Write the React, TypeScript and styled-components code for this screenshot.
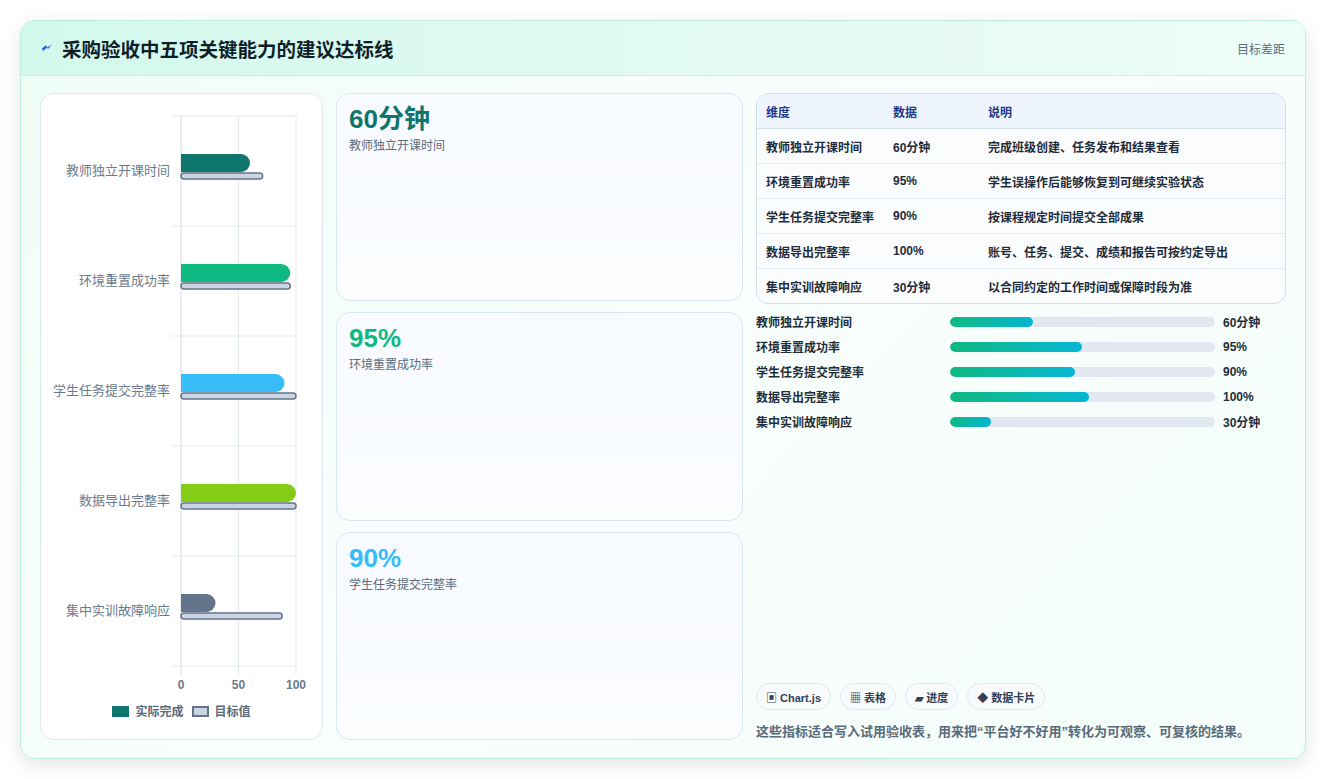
import React from "react";
import styled, { createGlobalStyle } from "styled-components";

const G = createGlobalStyle`
  html,body{margin:0;padding:0;background:#fff;}
  body{font-family:"Liberation Sans","Noto Sans CJK SC",sans-serif;}
`;
const Page = styled.div`padding:20px 21px 20px 20px;height:779px;box-sizing:border-box;`;
const Card = styled.div`
  height:739px;box-sizing:border-box;border:1px solid #bfeee0;border-radius:14px;overflow:hidden;
  background:linear-gradient(135deg,#effdf7 0%,#f8fefc 50%,#f4fdf9 100%);
  box-shadow:0 6px 18px rgba(15,60,50,.12);display:flex;flex-direction:column;
`;
const Header = styled.div`
  height:55px;flex:none;box-sizing:border-box;display:flex;align-items:center;justify-content:space-between;
  padding:0 20px;background:linear-gradient(90deg,#d2f8ec,#e4fbf3 60%,#eefdf8);border-bottom:1px solid #c9efe3;
`;
const Title = styled.h1`margin:0;font-size:19.5px;font-weight:700;color:#0f1f2a;display:flex;align-items:center;gap:9px;`;
const HeadRight = styled.span`font-size:12px;color:#5a6b7a;`;
const Body = styled.div`flex:1;display:grid;grid-template-columns:283px 407px 530px;gap:13px;padding:17px 18px 18px 19px;min-height:0;`;
const Panel = styled.div`background:#fff;border:1px solid #dfe8ee;border-radius:14px;display:flex;flex-direction:column;align-items:center;`;
const Legend = styled.div`display:flex;gap:8px;font-size:12px;font-weight:700;color:#5a6b7a;align-items:center;margin-top:8px;`;
const Sw = styled.span<{ $c: string; $b: string }>`display:inline-block;width:17px;height:11px;background:${p => p.$c};border:2px solid ${p => p.$b};box-sizing:border-box;margin-right:6px;vertical-align:-1px;`;
const Stack = styled.div`display:grid;grid-template-rows:repeat(3,1fr);gap:11px;`;
const Stat = styled.div`background:linear-gradient(180deg,#f7faff,#fbfdff);border:1px solid #dce6f0;border-radius:14px;padding:10px 12px;`;
const Big = styled.div<{ $c: string }>`font-size:26px;font-weight:700;color:${p => p.$c};line-height:30px;`;
const Sub = styled.div`font-size:12px;color:#5a6b7a;margin-top:2px;`;
const Right = styled.div`display:flex;flex-direction:column;`;
const Table = styled.table`width:100%;border-collapse:separate;border-spacing:0;border:1px solid #cfdfe8;border-radius:12px;overflow:hidden;font-size:12px;background:#fbfcfe;`;
const Th = styled.th`text-align:left;font-weight:700;color:#1e3a8a;background:#eef5fe;height:34px;padding:0 9px;border-bottom:1px solid #d5e2ec;`;
const Td = styled.td`height:34px;padding:0 9px;color:#1f2d3a;font-weight:700;border-bottom:1px solid #e3eaf0;tr:last-child &{border-bottom:none;}`;
const Prog = styled.div`display:grid;grid-template-columns:186px 265px 1fr;column-gap:8px;align-items:center;height:25px;font-size:12px;font-weight:700;color:#1f2d3a;`;
const Track = styled.div`height:10px;border-radius:5px;background:#e2e8f0;overflow:hidden;`;
const Fill = styled.div`height:100%;border-radius:5px;background:linear-gradient(90deg,#10b981,#06b6d4);`;
const Chips = styled.div`margin-top:auto;display:flex;gap:9px;`;
const Chip = styled.span`height:27px;box-sizing:border-box;padding:0 9px;border:1px solid #e1e7ee;border-radius:14px;background:#f8fafc;font-size:11px;font-weight:700;color:#334155;display:flex;align-items:center;gap:3px;`;
const Note = styled.p`margin:11px 0 0;font-size:13px;font-weight:700;color:#5a6b7a;`;

const rows = [
  ["教师独立开课时间", "60分钟", "完成班级创建、任务发布和结果查看", 60, 71, "#0f766e", 31.3],
  ["环境重置成功率", "95%", "学生误操作后能够恢复到可继续实验状态", 95, 95, "#10b981", 49.8],
  ["学生任务提交完整率", "90%", "按课程规定时间提交全部成果", 90, 100, "#38bdf8", 47.2],
  ["数据导出完整率", "100%", "账号、任务、提交、成绩和报告可按约定导出", 100, 100, "#84cc16", 52.5],
  ["集中实训故障响应", "30分钟", "以合同约定的工作时间或保障时段为准", 30, 88, "#64748b", 15.5],
] as const;

function Chart() {
  const x0 = 141, w = 115, top = 22;
  return (
    <svg width="283" height="600" viewBox="0 0 283 600">
      {[0, 1, 2, 3, 4, 5].map(i => <line key={i} x1={132} x2={256} y1={top + i * 110} y2={top + i * 110} stroke="#e5e9f0" />)}
      {[0, 0.5, 1].map(f => <line key={f} x1={x0 + f * w} x2={x0 + f * w} y1={top} y2={top + 559} stroke={f === 0 ? "#d4dae3" : "#e5e9f0"} />)}
      {rows.map((r, i) => {
        const cy = top + i * 110 + 55;
        const a = (r[3] / 100) * w, t = (r[4] / 100) * w;
        return (
          <g key={i}>
            <text x={130} y={cy + 4} textAnchor="end" fontSize="13" fill="#6b7a8c">{r[0]}</text>
            <path d={`M${x0} ${cy - 17}h${a - 9}a9 9 0 0 1 0 18h${-(a - 9)}z`} fill={r[5]} />
            <rect x={x0} y={cy + 2} width={t} height={6} rx={3} fill="#cbd5e1" stroke="#64748b" strokeWidth="1.5" />
          </g>
        );
      })}
      {[0, 50, 100].map((v, i) => <text key={v} x={x0 + i * w / 2} y={top + 573} textAnchor="middle" fontSize="12" fontWeight="700" fill="#6b7a8c">{v}</text>)}
    </svg>
  );
}

export default function App() {
  return (
    <Page>
      <G />
      <Card>
        <Header>
          <Title>
            <svg width="12" height="10" viewBox="0 0 12 10"><path d="M1 5.5 5 2 6 4.5 11 1.5 7 6 6 4.8 2 8Z" fill="#2563eb" /></svg>
            采购验收中五项关键能力的建议达标线
          </Title>
          <HeadRight>目标差距</HeadRight>
        </Header>
        <Body>
          <Panel>
            <Chart />
            <Legend><span><Sw $c="#0f766e" $b="#0f766e" />实际完成</span><span><Sw $c="#cbd5e1" $b="#64748b" />目标值</span></Legend>
          </Panel>
          <Stack>
            <Stat><Big $c="#0f766e">60分钟</Big><Sub>教师独立开课时间</Sub></Stat>
            <Stat><Big $c="#10b981">95%</Big><Sub>环境重置成功率</Sub></Stat>
            <Stat><Big $c="#38bdf8">90%</Big><Sub>学生任务提交完整率</Sub></Stat>
          </Stack>
          <Right>
            <Table>
              <thead><tr><Th style={{ width: 109 }}>维度</Th><Th style={{ width: 77 }}>数据</Th><Th>说明</Th></tr></thead>
              <tbody>{rows.map(r => <tr key={r[0]}><Td>{r[0]}</Td><Td>{r[1]}</Td><Td>{r[2]}</Td></tr>)}</tbody>
            </Table>
            <div style={{ marginTop: 5 }}>
              {rows.map(r => (
                <Prog key={r[0]}><span>{r[0]}</span><Track><Fill style={{ width: `${r[6]}%` }} /></Track><span>{r[1]}</span></Prog>
              ))}
            </div>
            <Chips>
              <Chip>▣ Chart.js</Chip><Chip>▦ 表格</Chip><Chip>▰ 进度</Chip><Chip>◆ 数据卡片</Chip>
            </Chips>
            <Note>这些指标适合写入试用验收表，用来把“平台好不好用”转化为可观察、可复核的结果。</Note>
          </Right>
        </Body>
      </Card>
    </Page>
  );
}
